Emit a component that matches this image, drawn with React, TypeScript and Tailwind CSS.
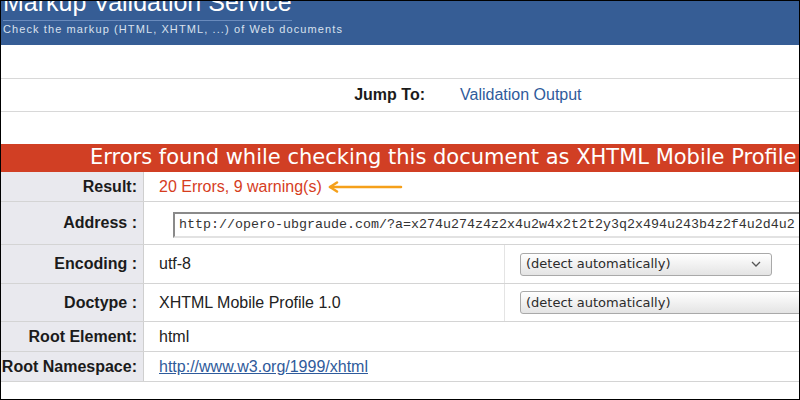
const Arrow = () => (
  <svg width="76" height="12" viewBox="0 0 76 12" className="ml-[5px]">
    <path d="M3 6 H74" stroke="#f5a01a" strokeWidth="2.5" strokeLinecap="round" />
    <path d="M10 1.5 L3 6 L10 10.5" fill="none" stroke="#f5a01a" strokeWidth="2.5" strokeLinecap="round" strokeLinejoin="round" />
  </svg>
);

const Label = ({ children }: { children: React.ReactNode }) => (
  <div className="w-[143px] shrink-0 bg-[#e9e9ee] border-r border-[#cfcfcf] flex items-center justify-end pr-[6px] font-bold text-[16px] text-[#1b1b1b]">
    {children}
  </div>
);

const Select = ({ w }: { w: string }) => (
  <div className={`${w} h-[23px] rounded-[3px] border border-[#a9a9a9] bg-gradient-to-b from-white to-[#e4e4e4] flex items-center justify-between pl-[5px] pr-[10px] font-['DejaVu_Sans',sans-serif] text-[13px] text-[#2b2b2b] shrink-0`}>
    <span>(detect automatically)</span>
    <svg width="10" height="6" viewBox="0 0 10 6">
      <path d="M1 1 L5 5 L9 1" fill="none" stroke="#555" strokeWidth="1.3" />
    </svg>
  </div>
);

export default function App() {
  return (
    <div className="w-[800px] h-[400px] border border-black overflow-hidden bg-white font-['Liberation_Sans',Arial,sans-serif]">
      <div className="h-[44px] bg-[#365d95] px-[2px] overflow-hidden">
        <div className="mt-[-14px] block w-fit border-b border-[#6a8bbd] text-white text-[25px] leading-[30px] pb-[3px]">
          Markup Validation Service
        </div>
        <div className="text-[11px] tracking-[1.1px] text-[#d9e1ee] leading-[14px] mt-[1px]">
          Check the markup (HTML, XHTML, ...) of Web documents
        </div>
      </div>

      <div className="h-[33px]" />

      <div className="h-[34px] border-y border-[#d8d8d8] flex items-center text-[16px]">
        <div className="w-[424px] text-right font-bold text-[#1b1b1b]">Jump To:</div>
        <div className="ml-[35px] text-[#2f5b9b]">Validation Output</div>
      </div>

      <div className="h-[32px]" />

      <div className="h-[28px] bg-[#d13f24] text-white whitespace-nowrap pl-[89px] flex items-center font-['DejaVu_Sans',sans-serif] text-[21px]">
        Errors found while checking this document as XHTML Mobile Profile
      </div>

      <div className="text-[16px] text-[#222]">
        <div className="h-[30px] flex border-b border-[#d4d4d4]">
          <Label>Result:</Label>
          <div className="flex items-center pl-[15px] text-[#d63d1e]">
            20 Errors, 9 warning(s)
            <Arrow />
          </div>
        </div>

        <div className="h-[43px] flex border-b border-[#d4d4d4]">
          <Label>Address :</Label>
          <div className="flex items-center pl-[29px] pt-[3px] overflow-hidden">
            <div className="h-[26px] w-[700px] shrink-0 border-2 border-t-[#8a8a8a] border-l-[#8a8a8a] border-b-[#e2e2e2] border-r-[#e2e2e2] bg-white flex items-center pl-[4px] font-['Liberation_Mono',monospace] text-[13.33px] text-[#333] whitespace-nowrap">
              http://opero-ubgraude.com/?a=x274u274z4z2x4u2w4x2t2t2y3q2x494u243b4z2f4u2d4u2
            </div>
          </div>
        </div>

        <div className="h-[39px] flex border-b border-[#d4d4d4]">
          <Label>Encoding :</Label>
          <div className="w-[361px] shrink-0 flex items-center pl-[15px] border-r border-[#e4e4e4]">utf-8</div>
          <div className="flex items-center pl-[15px]">
            <Select w="w-[252px]" />
          </div>
        </div>

        <div className="h-[38px] flex border-b border-[#d4d4d4]">
          <Label>Doctype :</Label>
          <div className="w-[361px] shrink-0 flex items-center pl-[15px] border-r border-[#e4e4e4]">XHTML Mobile Profile 1.0</div>
          <div className="flex items-center pl-[15px] overflow-hidden">
            <Select w="w-[320px]" />
          </div>
        </div>

        <div className="h-[30px] flex border-b border-[#d4d4d4]">
          <Label>Root Element:</Label>
          <div className="flex items-center pl-[15px]">html</div>
        </div>

        <div className="h-[30px] flex border-b border-[#d4d4d4]">
          <Label>Root Namespace:</Label>
          <div className="flex items-center pl-[15px]">
            <span className="text-[#2f5b9b] underline">http://www.w3.org/1999/xhtml</span>
          </div>
        </div>
      </div>
    </div>
  );
}
